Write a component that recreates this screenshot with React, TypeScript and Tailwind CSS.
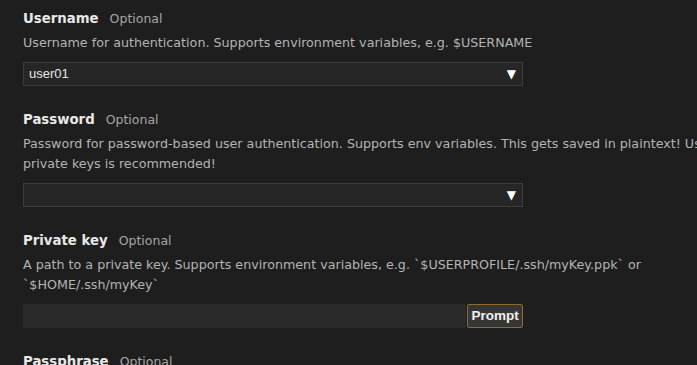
import React from "react";

type Field = {
  name: string;
  lines: string[];
  kind: "select" | "prompt";
  value?: string;
};

const fields: Field[] = [
  {
    name: "Username",
    lines: ["Username for authentication. Supports environment variables, e.g. $USERNAME"],
    kind: "select",
    value: "user01",
  },
  {
    name: "Password",
    lines: [
      "Password for password-based user authentication. Supports env variables. This gets saved in plaintext! Using",
      "private keys is recommended!",
    ],
    kind: "select",
  },
  {
    name: "Private key",
    lines: [
      "A path to a private key. Supports environment variables, e.g. `$USERPROFILE/.ssh/myKey.ppk` or",
      "`$HOME/.ssh/myKey`",
    ],
    kind: "prompt",
  },
  {
    name: "Passphrase",
    lines: ["Passphrase for the private key."],
    kind: "prompt",
  },
];

function SelectInput({ value }: { value?: string }) {
  return (
    <div className="mt-[9px] flex h-[24px] w-[500px] items-center justify-between border border-[#3c3c3c] bg-[#262626] pl-[5px] pr-[6px]">
      <span className="font-['Liberation_Sans',Arial,sans-serif] text-[13px] text-[#e6e6e6]">
        {value ?? ""}
      </span>
      <span className="font-['DejaVu_Sans',sans-serif] text-[12px] leading-none text-white">▼</span>
    </div>
  );
}

function PromptInput() {
  return (
    <div className="mt-[9px] flex h-[24px] w-[500px] items-stretch">
      <div className="flex-1 bg-[#2a2a2a]" />
      <button className="ml-[1px] w-[56px] rounded-[2px] border border-[#8c6d2c] bg-[#363636] font-['Liberation_Sans',Arial,sans-serif] text-[13.5px] font-bold text-[#f0f0f0]">
        Prompt
      </button>
    </div>
  );
}

export default function App() {
  return (
    <div className="h-[365px] w-[697px] overflow-hidden bg-[#1e1e1e] font-['DejaVu_Sans',sans-serif]">
      <div className="pl-[23px] pt-[9px]">
        {fields.map((f) => (
          <div key={f.name} className="mb-[24px]">
            <div className="flex h-[20px] items-center gap-[11px]">
              <span className="text-[13.3px] font-bold text-[#e8e8e8]">{f.name}</span>
              <span className="text-[12.5px] text-[#a6a6a6]">Optional</span>
            </div>
            <div className="mt-[4px] text-[12.7px] leading-[20px] text-[#b4b4b4]">
              {f.lines.map((l) => (
                <div key={l} className="whitespace-nowrap">
                  {l}
                </div>
              ))}
            </div>
            {f.kind === "select" ? <SelectInput value={f.value} /> : <PromptInput />}
          </div>
        ))}
      </div>
    </div>
  );
}
